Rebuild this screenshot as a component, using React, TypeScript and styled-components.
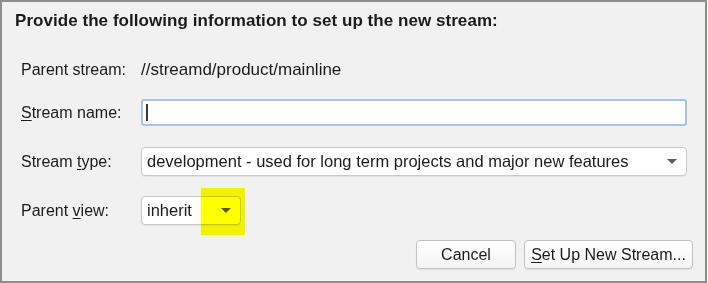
import styled, { createGlobalStyle } from "styled-components";

const GlobalStyle = createGlobalStyle`
  body {
    margin: 0;
    font-family: "Liberation Sans", Arial, sans-serif;
    background: #ffffff;
  }
`;

const Frame = styled.div`
  box-sizing: border-box;
  width: 707px;
  height: 283px;
  border: 2px solid #8d8d8d;
  background: #f1f1f1;
  padding: 9px 12px 12px 13px;
  color: #1b1b1b;
  font-size: 16px;
`;

const Title = styled.div`
  font-weight: bold;
  font-size: 17px;
  line-height: 20px;
  letter-spacing: 0.05px;
`;

const Form = styled.div`
  display: grid;
  grid-template-columns: 120px 1fr;
  grid-template-rows: 16px 29px 29px 29px;
  row-gap: 20px;
  align-items: center;
  margin: 31px 6px 0 6px;
`;

const Label = styled.div`
  line-height: 16px;
  white-space: nowrap;
`;

const Value = styled.div`
  line-height: 16px;
  font-size: 17px;
`;

const Key = styled.span`
  text-decoration: underline;
  text-underline-offset: 2px;
`;

const TextInput = styled.div`
  box-sizing: border-box;
  height: 27px;
  background: #ffffff;
  border: 2px solid #a9c3e0;
  border-radius: 3px;
  display: flex;
  align-items: center;
  padding-left: 3px;
`;

const Caret = styled.span`
  width: 2px;
  height: 17px;
  background: #3a3a3a;
`;

const Select = styled.div<{ $width?: number }>`
  position: relative;
  box-sizing: border-box;
  height: 29px;
  width: ${(p) => (p.$width ? `${p.$width}px` : "auto")};
  background: #ffffff;
  border: 1px solid #c9c9c9;
  border-radius: 4px;
  box-shadow: 0 1px 1px rgba(0, 0, 0, 0.06);
  display: flex;
  align-items: center;
  justify-content: space-between;
  padding: 0 9px 0 5px;
  font-size: 16.5px;
  white-space: nowrap;
`;

const Arrow = styled.span`
  width: 0;
  height: 0;
  border-left: 5px solid transparent;
  border-right: 5px solid transparent;
  border-top: 5px solid #5a5a5a;
`;

const Highlight = styled.div`
  position: absolute;
  left: 59px;
  top: -9px;
  width: 44px;
  height: 47px;
  background: #ffff00;
  mix-blend-mode: multiply;
  pointer-events: none;
`;

const Buttons = styled.div`
  display: flex;
  justify-content: flex-end;
  gap: 8px;
  margin-top: 15px;
`;

const Button = styled.button<{ $width: number }>`
  box-sizing: border-box;
  width: ${(p) => p.$width}px;
  height: 29px;
  font-family: inherit;
  font-size: 16px;
  color: #1b1b1b;
  background: linear-gradient(#ffffff, #f4f4f4);
  border: 1px solid #c2c2c2;
  border-radius: 4px;
  box-shadow: 0 1px 1px rgba(0, 0, 0, 0.08);
  padding: 0;
  white-space: nowrap;
`;

export default function App() {
  return (
    <>
      <GlobalStyle />
      <Frame>
        <Title>Provide the following information to set up the new stream:</Title>
        <Form>
          <Label>Parent stream:</Label>
          <Value>//streamd/product/mainline</Value>

          <Label>
            <Key>S</Key>tream name:
          </Label>
          <TextInput>
            <Caret />
          </TextInput>

          <Label>
            Stream <Key>t</Key>ype:
          </Label>
          <Select>
            <span>development - used for long term projects and major new features</span>
            <Arrow />
          </Select>

          <Label>
            Parent <Key>v</Key>iew:
          </Label>
          <div>
            <Select $width={100}>
              <span>inherit</span>
              <Arrow />
              <Highlight />
            </Select>
          </div>
        </Form>
        <Buttons>
          <Button $width={100}>Cancel</Button>
          <Button $width={169}>
            <Key>S</Key>et Up New Stream...
          </Button>
        </Buttons>
      </Frame>
    </>
  );
}
